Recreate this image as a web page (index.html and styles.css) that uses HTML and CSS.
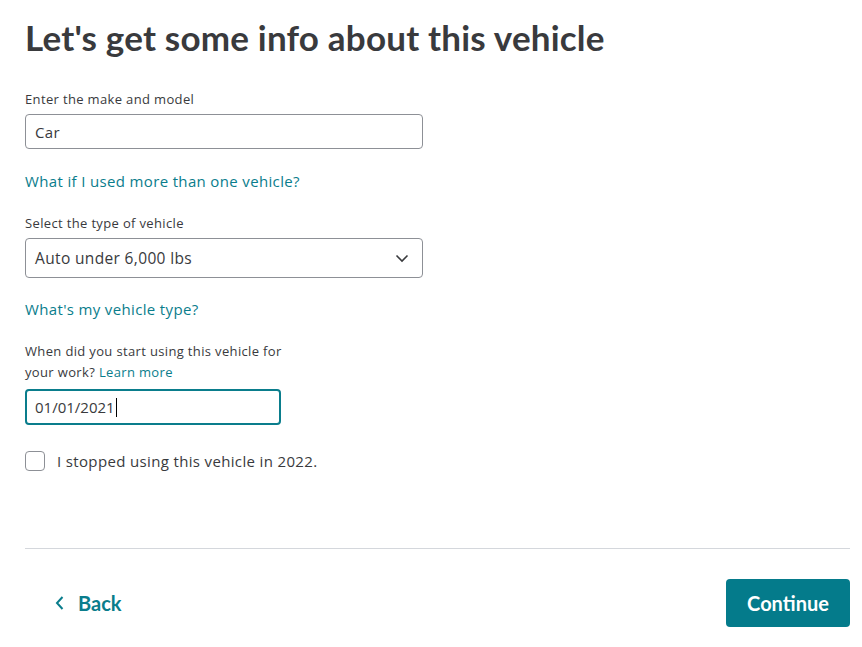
FILE: index.html
```html
<!DOCTYPE html>
<html lang="en">
<head>
<meta charset="utf-8">
<title>Vehicle info</title>
<link rel="stylesheet" href="styles.css">
</head>
<body>
<div class="page">
  <h1 class="title">Let's get some info about this vehicle</h1>

  <div class="field field-first">
    <label class="label">Enter the make and model</label>
    <div class="input input-wide">Car</div>
  </div>
  <a class="link link-first">What if I used more than one vehicle?</a>

  <div class="field field-select">
    <label class="label">Select the type of vehicle</label>
    <div class="input input-wide select">
      <span>Auto under 6,000 lbs</span>
      <svg class="chev" width="14" height="9" viewBox="0 0 14 9"><path d="M1.5 1.5 L7 7 L12.5 1.5" fill="none" stroke="#393a3d" stroke-width="1.6"/></svg>
    </div>
  </div>
  <a class="link link-second">What's my vehicle type?</a>

  <div class="field field-date">
    <div class="label label-multi">
      <span class="label-line">When did you start using this vehicle for</span>
      <span class="label-line"><span>your work?</span> <a class="inline-link">Learn more</a></span>
    </div>
    <div class="input input-date"><span>01/01/2021</span><span class="caret"></span></div>
  </div>

  <div class="check-row">
    <span class="checkbox"></span>
    <span class="check-text">I stopped using this vehicle in 2022.</span>
  </div>

  <div class="footer">
    <a class="back">
      <svg width="10" height="16" viewBox="0 0 10 16"><path d="M7.5 2 L2 8 L7.5 14" fill="none" stroke="#0a7d8c" stroke-width="2"/></svg>
      <span>Back</span>
    </a>
    <button class="continue">Continue</button>
  </div>
</div>
</body>
</html>
```

FILE: styles.css
```css
html, body {
  margin: 0;
  padding: 0;
  background: #ffffff;
}
body {
  font-family: "Open Sans", "Noto Sans", sans-serif;
  color: #393a3d;
  letter-spacing: 0.35px;
}
.page {
  padding: 15px 12px 0 25px;
  width: 825px;
}
.title {
  margin: 0;
  font-family: "Lato", "Open Sans", sans-serif;
  font-size: 35px;
  line-height: 44px;
  font-weight: 700;
  color: #393a3d;
  letter-spacing: 0.2px;
}
.field {
  display: flex;
  flex-direction: column;
}
.label {
  font-size: 13px;
  line-height: 18px;
  color: #393a3d;
  margin: 0 0 6px 0;
}
.field-first { margin-top: 31px; }
.field-select { margin-top: 23px; }
.field-date { margin-top: 22px; }
.label-multi {
  display: flex;
  flex-direction: column;
  line-height: 21px;
  margin-bottom: 6px;
}
.label-line {
  display: block;
  white-space: nowrap;
}
.input {
  box-sizing: border-box;
  border: 1px solid #8d9096;
  border-radius: 4px;
  font-size: 15px;
  color: #393a3d;
  display: flex;
  align-items: center;
  padding: 0 9px;
}
.input-wide {
  width: 398px;
  height: 35px;
}
.select {
  height: 40px;
  justify-content: space-between;
  font-size: 15.5px;
}
.chev {
  margin-right: 4px;
}
.input-date {
  width: 256px;
  height: 36px;
  border: 2px solid #0a7d8c;
  padding-left: 8px;
  font-size: 15px;
  letter-spacing: 0;
}
.caret {
  display: inline-block;
  width: 1px;
  height: 19px;
  background: #000;
  margin-left: 1px;
}
.link {
  display: block;
  color: #0a7d8c;
  font-size: 15px;
  font-weight: 500;
  line-height: 20px;
}
.link-first { margin-top: 22px; }
.link-second { margin-top: 21px; }
.inline-link {
  color: #0a7d8c;
  font-weight: 500;
}
.check-row {
  display: flex;
  align-items: center;
  margin-top: 26px;
}
.checkbox {
  box-sizing: border-box;
  width: 20px;
  height: 20px;
  border: 1px solid #8d9096;
  border-radius: 4px;
  margin-right: 12px;
}
.check-text {
  font-size: 15px;
  color: #393a3d;
}
.footer {
  margin-top: 77px;
  border-top: 1px solid #d4d7dc;
  padding-top: 30px;
  display: flex;
  justify-content: space-between;
  align-items: center;
}
.back {
  display: flex;
  align-items: center;
  gap: 13px;
  margin-left: 30px;
  color: #0a7d8c;
  font-family: "Lato", "Open Sans", sans-serif;
  font-size: 20px;
  font-weight: 700;
  letter-spacing: 0;
}
.continue {
  width: 124px;
  height: 48px;
  border: none;
  border-radius: 4px;
  background: #047b8b;
  color: #ffffff;
  font-family: "Lato", "Open Sans", sans-serif;
  font-size: 20px;
  font-weight: 700;
  letter-spacing: 0;
}
```
